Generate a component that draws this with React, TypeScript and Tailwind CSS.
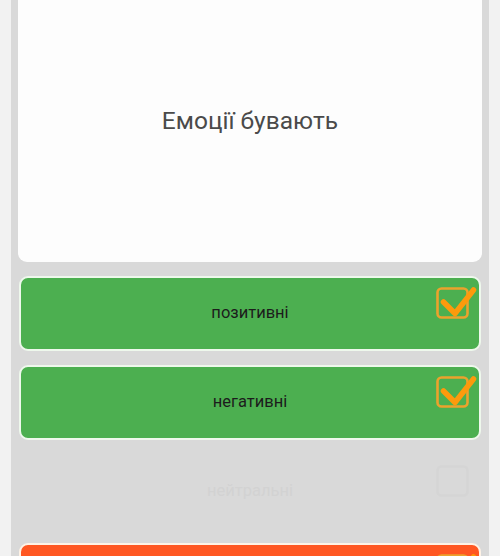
import type { ReactNode } from 'react'

const CheckIcon = ({ faint = false }: { faint?: boolean }) => (
  <svg
    width="44"
    height="36"
    viewBox="0 0 44 36"
    className="absolute top-[7px] right-[1px]"
    fill="none"
  >
    <rect
      x="3.5"
      y="3.5"
      width="30"
      height="29"
      rx="4"
      stroke={faint ? '#d5d5d5' : '#eca22c'}
      strokeWidth="2.6"
    />
    {!faint && (
      <path
        d="M9.5 17 L21 28.5 L39.5 5"
        stroke="#fd9a0c"
        strokeWidth="5.5"
        strokeLinecap="round"
        strokeLinejoin="round"
      />
    )}
  </svg>
)

interface OptionProps {
  children?: ReactNode
  variant: 'green' | 'hidden' | 'orange'
}

const Option = ({ children, variant }: OptionProps) => {
  const tone =
    variant === 'green'
      ? 'bg-[#4caf50] border-[#eef8ec] text-[#1c1c1c]'
      : variant === 'orange'
        ? 'bg-[#ff5722] border-[#fff3e6] text-[#1c1c1c]'
        : 'bg-transparent border-transparent text-[#d2d2d2]'

  return (
    <div
      className={`relative mx-px h-[75px] shrink-0 rounded-[9px] border-2 flex items-center justify-center text-[16.5px] ${tone}`}
    >
      {children && <span>{children}</span>}
      {variant === 'hidden' ? <CheckIcon faint /> : <CheckIcon />}
    </div>
  )
}

export default function App() {
  return (
    <div
      className="w-[500px] h-[556px] overflow-hidden bg-[#f2f2f2] px-[11px]"
      style={{ fontFamily: 'Roboto, "Noto Sans", sans-serif' }}
    >
      <div className="h-full bg-[#d9d9d9] px-[7px] flex flex-col gap-[14px]">
        <div className="h-[262px] shrink-0 bg-[#fdfdfd] rounded-b-[9px] flex items-center justify-center pb-[20px]">
          <h1 className="text-[24.5px] text-[#4a4a4a]">Емоції бувають</h1>
        </div>
        <Option variant="green">позитивні</Option>
        <Option variant="green">негативні</Option>
        <Option variant="hidden">нейтральні</Option>
        <Option variant="orange" />
      </div>
    </div>
  )
}
